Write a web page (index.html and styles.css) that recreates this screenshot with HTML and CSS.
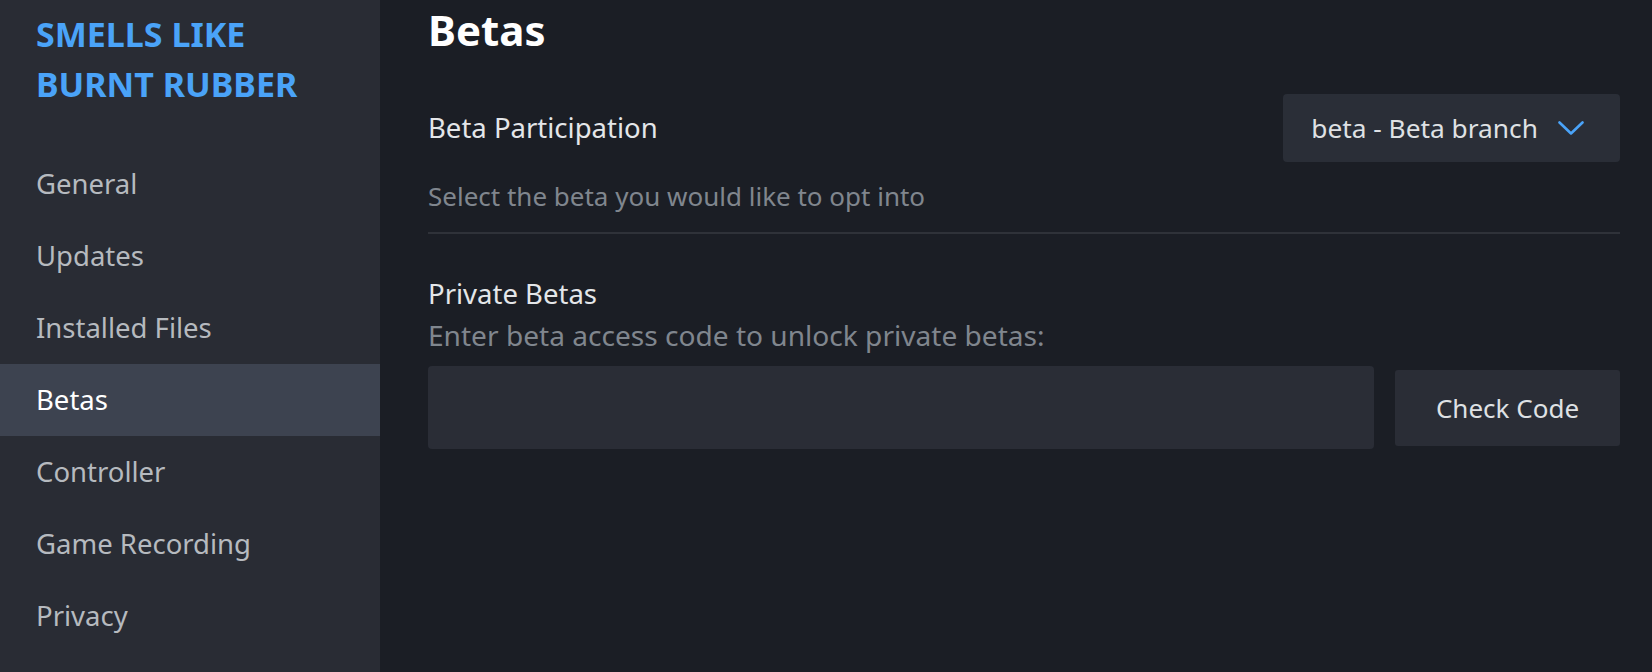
FILE: index.html
```html
<!DOCTYPE html>
<html lang="en">
<head>
<meta charset="utf-8">
<title>Betas</title>
<link rel="stylesheet" href="styles.css">
</head>
<body>
<div class="app">
  <aside class="sidebar">
    <div class="game-title">SMELLS LIKE<br>BURNT RUBBER</div>
    <nav class="nav">
      <div class="nav-item">General</div>
      <div class="nav-item">Updates</div>
      <div class="nav-item">Installed Files</div>
      <div class="nav-item active">Betas</div>
      <div class="nav-item">Controller</div>
      <div class="nav-item">Game Recording</div>
      <div class="nav-item">Privacy</div>
    </nav>
  </aside>
  <main class="content">
    <h1 class="page-title">Betas</h1>
    <div class="setting-row">
      <div class="label">Beta Participation</div>
      <div class="dropdown">
        <span class="dropdown-text">beta - Beta branch</span>
        <svg class="chevron" width="26" height="14" viewBox="0 0 26 14"><polyline points="1.5,1.5 13,12.5 24.5,1.5" fill="none" stroke="#4aa3f8" stroke-width="2.6" stroke-linecap="round" stroke-linejoin="round"/></svg>
      </div>
    </div>
    <div class="desc first-desc">Select the beta you would like to opt into</div>
    <div class="divider"></div>
    <div class="label private-label">Private Betas</div>
    <div class="desc desc-large">Enter beta access code to unlock private betas:</div>
    <div class="code-row">
      <div class="code-input"></div>
      <div class="btn">Check Code</div>
    </div>
  </main>
</div>
</body>
</html>
```

FILE: styles.css
```css
html, body {
  margin: 0;
  padding: 0;
  height: 100%;
}
body {
  background: #1b1e25;
  font-family: "Noto Sans", "Open Sans", sans-serif;
  overflow: hidden;
}
.app {
  display: flex;
  height: 672px;
}
.sidebar {
  width: 380px;
  flex-shrink: 0;
  background: #292c34;
  display: flex;
  flex-direction: column;
}
.game-title {
  padding: 9px 0 0 36px;
  font-size: 34px;
  line-height: 50px;
  font-weight: 700;
  color: #4aa3f8;
  height: 100px;
}
.nav {
  margin-top: 39px;
  display: flex;
  flex-direction: column;
}
.nav-item {
  height: 72px;
  line-height: 72px;
  padding-left: 36px;
  font-size: 27.5px;
  color: #b6babf;
}
.nav-item.active {
  background: #3d4350;
  color: #ffffff;
}
.content {
  flex: 1;
  padding: 5px 32px 0 48px;
  display: flex;
  flex-direction: column;
}
.page-title {
  margin: 0;
  font-size: 42px;
  line-height: 50px;
  font-weight: 700;
  color: #ffffff;
}
.setting-row {
  margin-top: 39px;
  height: 68px;
  display: flex;
  align-items: center;
  justify-content: space-between;
}
.label {
  font-size: 27.5px;
  line-height: 38px;
  color: #e4e6e9;
}
.dropdown {
  height: 68px;
  box-sizing: border-box;
  padding: 0 36px 0 28px;
  background: #2a2e37;
  border-radius: 4px;
  display: flex;
  align-items: center;
  gap: 20px;
}
.dropdown-text {
  font-size: 26.3px;
  color: #dfe1e4;
}
.chevron {
  display: block;
}
.desc {
  font-size: 26px;
  line-height: 36px;
  color: #80868e;
}
.first-desc {
  margin-top: 16px;
}
.divider {
  margin-top: 18px;
  height: 2px;
  background: #2f3239;
}
.private-label {
  margin-top: 41px;
}
.desc-large {
  margin-top: 3px;
  font-size: 28.1px;
  line-height: 38px;
}
.code-row {
  margin-top: 12px;
  display: flex;
  align-items: center;
  gap: 21px;
}
.code-input {
  flex: 1;
  height: 83px;
  background: #2a2d36;
  border-radius: 4px;
}
.btn {
  width: 225px;
  height: 76px;
  background: #2a2d36;
  border-radius: 3px;
  display: flex;
  align-items: center;
  justify-content: center;
  font-size: 26px;
  color: #dfe1e4;
}
```
